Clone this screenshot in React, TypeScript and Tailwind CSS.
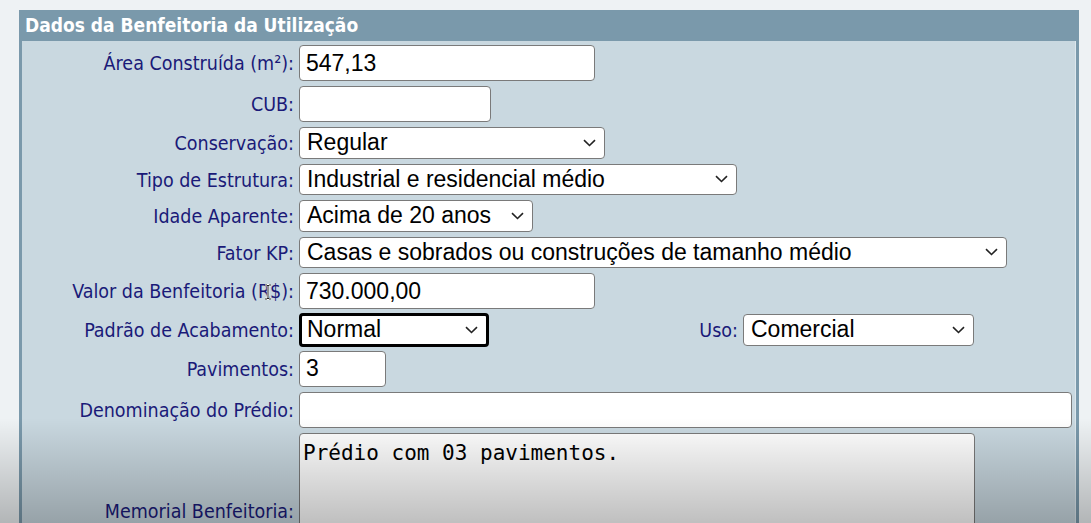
const labelFont = "font-['DejaVu_Sans_Condensed','DejaVu_Sans',sans-serif]";
const fieldFont = "font-['Liberation_Sans',Arial,sans-serif]";

function Chevron() {
  return (
    <svg width="13" height="8" viewBox="0 0 13 8" className="absolute right-[8px] top-1/2 -translate-y-1/2">
      <path d="M1 1.2l5.5 5.3 5.5-5.3" fill="none" stroke="#222" strokeWidth="1.6" />
    </svg>
  );
}

function Label({ text, className = "" }: { text: string; className?: string }) {
  return (
    <div
      className={`w-[272px] shrink-0 translate-y-[1px] text-right text-[19.5px] leading-none text-[#1a1a78] ${labelFont} ${className}`}
    >
      {text}
    </div>
  );
}

function TextBox({ value, w }: { value: string; w: string }) {
  return (
    <div
      className={`${w} h-[36px] shrink-0 rounded-[4px] border border-[#7a7a7a] bg-white pl-[6px] flex items-center text-[23px] text-black ${fieldFont}`}
    >
      {value}
    </div>
  );
}

function Select({ value, w, focus = false }: { value: string; w: string; focus?: boolean }) {
  return (
    <div
      className={`${w} relative shrink-0 rounded-[4px] bg-white flex items-center text-[23px] text-black ${fieldFont} ${
        focus ? "h-[33.5px] -my-[1px] border-[3px] border-black pl-[5px]" : "h-[31.5px] border border-[#7a7a7a] pl-[7px]"
      }`}
    >
      <span className="leading-none">{value}</span>
      <Chevron />
    </div>
  );
}

function Row({ children }: { children: React.ReactNode }) {
  return <div className="flex items-center gap-[5px]">{children}</div>;
}

export default function App() {
  return (
    <div className="relative h-[523px] overflow-hidden bg-[#eef2f4] pt-[10px] pl-[19px]">
      <div className="w-[1060px]">
        <div
          className={`h-[31px] bg-[#7a99ab] pl-[6px] flex items-center text-white font-bold text-[19px] ${labelFont}`}
        >
          Dados da Benfeitoria da Utilização
        </div>
        <div className="h-[600px] bg-[#c9d8e0] border-x-[3px] border-[#7a99ab] shadow-[inset_-1px_0_0_#dde7ed] pt-[4px] flex flex-col gap-[5px]">
          <Row>
            <Label text="Área Construída (m²):" />
            <TextBox value="547,13" w="w-[296px]" />
          </Row>
          <Row>
            <Label text="CUB:" />
            <TextBox value="" w="w-[192px]" />
          </Row>
          <Row>
            <Label text="Conservação:" />
            <Select value="Regular" w="w-[306px]" />
          </Row>
          <Row>
            <Label text="Tipo de Estrutura:" />
            <Select value="Industrial e residencial médio" w="w-[438px]" />
          </Row>
          <Row>
            <Label text="Idade Aparente:" />
            <Select value="Acima de 20 anos" w="w-[234px]" />
          </Row>
          <Row>
            <Label text="Fator KP:" />
            <Select value="Casas e sobrados ou construções de tamanho médio" w="w-[708px]" />
          </Row>
          <Row>
            <Label text="Valor da Benfeitoria (R$):" />
            <TextBox value="730.000,00" w="w-[296px]" />
          </Row>
          <Row>
            <Label text="Padrão de Acabamento:" />
            <Select value="Normal" w="w-[190px]" focus />
            <div className={`w-[244px] translate-y-[1px] text-right text-[19.5px] leading-none text-[#1a1a78] ${labelFont}`}>
              Uso:
            </div>
            <Select value="Comercial" w="w-[231px]" />
          </Row>
          <Row>
            <Label text="Pavimentos:" />
            <TextBox value="3" w="w-[87px]" />
          </Row>
          <Row>
            <Label text="Denominação do Prédio:" />
            <TextBox value="" w="w-[773px]" />
          </Row>
          <div className="flex items-start gap-[5px]">
            <Label text="Memorial Benfeitoria:" className="mt-[68px]" />
            <div className="w-[676px] h-[140px] shrink-0 rounded-[4px] border border-[#7a7a7a] bg-white px-[3px] pt-[6px] text-[21px] leading-tight text-black font-['DejaVu_Sans_Mono',monospace]">
              Prédio com 03 pavimentos.
            </div>
          </div>
        </div>
      </div>

      {/* mouse cursor over the label */}
      <svg width="8" height="16" viewBox="0 0 8 16" className="absolute left-[264px] top-[284px]">
        <path d="M1 1h2l1 1 1-1h2M4 2v12M1 15h2l1-1 1 1h2" fill="none" stroke="#fff" strokeWidth="2.4" />
        <path d="M1 1h2l1 1 1-1h2M4 2v12M1 15h2l1-1 1 1h2" fill="none" stroke="#222" strokeWidth="1" />
      </svg>

      {/* video player shade at the bottom */}
      <div className="pointer-events-none absolute inset-x-0 bottom-0 h-[105px] bg-gradient-to-b from-transparent to-black/25" />
    </div>
  );
}
